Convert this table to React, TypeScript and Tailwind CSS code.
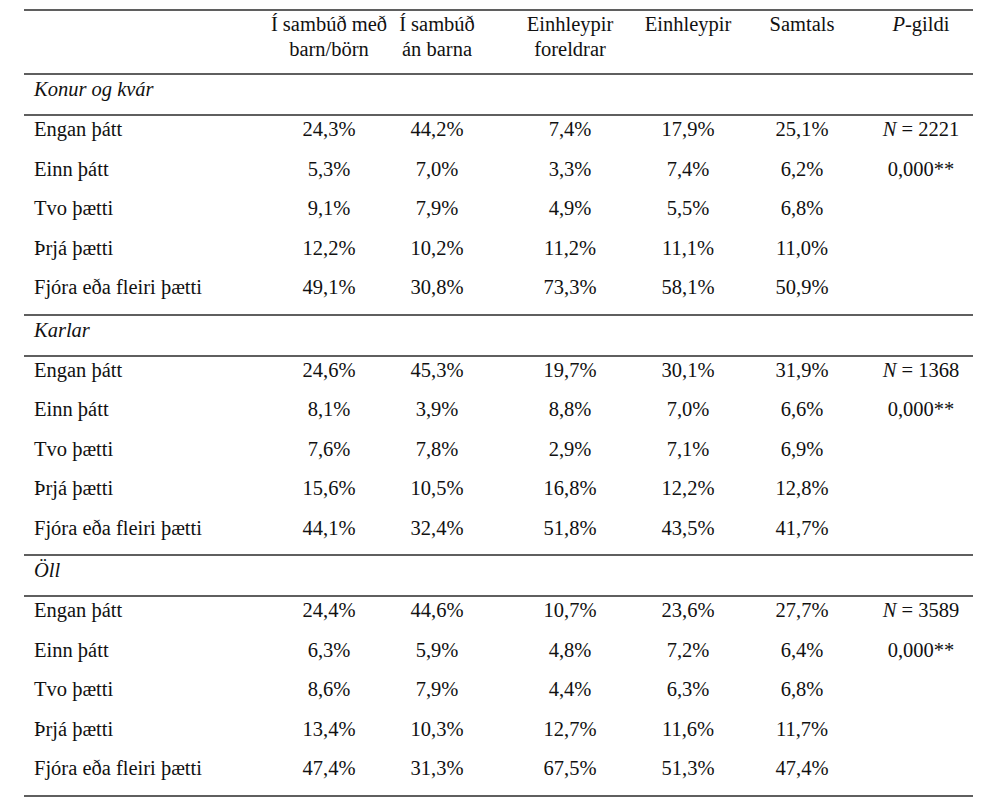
import React from 'react'

type Row = { label: string; values: string[]; p?: React.ReactNode }
type Group = { title: string; rows: Row[] }

const GROUPS: Group[] = [
  {
    title: 'Konur og kvár',
    rows: [
      { label: 'Engan þátt', values: ['24,3%', '44,2%', '7,4%', '17,9%', '25,1%'], p: <><i>N</i>&nbsp;= 2221</> },
      { label: 'Einn þátt', values: ['5,3%', '7,0%', '3,3%', '7,4%', '6,2%'], p: '0,000**' },
      { label: 'Tvo þætti', values: ['9,1%', '7,9%', '4,9%', '5,5%', '6,8%'] },
      { label: 'Þrjá þætti', values: ['12,2%', '10,2%', '11,2%', '11,1%', '11,0%'] },
      { label: 'Fjóra eða fleiri þætti', values: ['49,1%', '30,8%', '73,3%', '58,1%', '50,9%'] },
    ],
  },
  {
    title: 'Karlar',
    rows: [
      { label: 'Engan þátt', values: ['24,6%', '45,3%', '19,7%', '30,1%', '31,9%'], p: <><i>N</i>&nbsp;= 1368</> },
      { label: 'Einn þátt', values: ['8,1%', '3,9%', '8,8%', '7,0%', '6,6%'], p: '0,000**' },
      { label: 'Tvo þætti', values: ['7,6%', '7,8%', '2,9%', '7,1%', '6,9%'] },
      { label: 'Þrjá þætti', values: ['15,6%', '10,5%', '16,8%', '12,2%', '12,8%'] },
      { label: 'Fjóra eða fleiri þætti', values: ['44,1%', '32,4%', '51,8%', '43,5%', '41,7%'] },
    ],
  },
  {
    title: 'Öll',
    rows: [
      { label: 'Engan þátt', values: ['24,4%', '44,6%', '10,7%', '23,6%', '27,7%'], p: <><i>N</i>&nbsp;= 3589</> },
      { label: 'Einn þátt', values: ['6,3%', '5,9%', '4,8%', '7,2%', '6,4%'], p: '0,000**' },
      { label: 'Tvo þætti', values: ['8,6%', '7,9%', '4,4%', '6,3%', '6,8%'] },
      { label: 'Þrjá þætti', values: ['13,4%', '10,3%', '12,7%', '11,6%', '11,7%'] },
      { label: 'Fjóra eða fleiri þætti', values: ['47,4%', '31,3%', '67,5%', '51,3%', '47,4%'] },
    ],
  },
]

// label column + 6 value columns, sized so each value is centred where the table has it
const cols = 'grid grid-cols-[251px_108px_108px_158px_78px_150px_88px]'

function Cell({ children }: { children?: React.ReactNode }) {
  return <div className="flex justify-center whitespace-nowrap">{children}</div>
}

export default function App() {
  return (
    <div className="min-h-[805px] w-[1000px] bg-white pt-[9px] font-['Liberation_Serif'] text-[#111]">
      <div className="ml-[24px] w-[949px] text-[20.5px] leading-[24px]">
        {/* header */}
        <div className={`${cols} h-[66px] border-y-2 border-[#5f5f5f] pt-[1px] leading-[25px]`}>
          <div />
          <Cell><div className="text-center">Í sambúð með<br />barn/börn</div></Cell>
          <Cell><div className="text-center">Í sambúð<br />án barna</div></Cell>
          <Cell><div className="text-center">Einhleypir<br />foreldrar</div></Cell>
          <Cell>Einhleypir</Cell>
          <Cell>Samtals</Cell>
          <Cell><span><i>P</i>-gildi</span></Cell>
        </div>

        {GROUPS.map((g) => (
          <div key={g.title} className="border-b-2 border-[#5f5f5f]">
            <div className="h-[41px] border-b-2 border-[#5f5f5f] pl-[10px] pt-[2px] italic">{g.title}</div>
            {g.rows.map((r) => (
              <div key={r.label} className={`${cols} h-[39.5px] pt-[1px]`}>
                <div className="pl-[10px] whitespace-nowrap">{r.label}</div>
                {r.values.map((v, i) => (
                  <Cell key={i}>{v}</Cell>
                ))}
                <Cell>{r.p}</Cell>
              </div>
            ))}
          </div>
        ))}
      </div>
    </div>
  )
}
